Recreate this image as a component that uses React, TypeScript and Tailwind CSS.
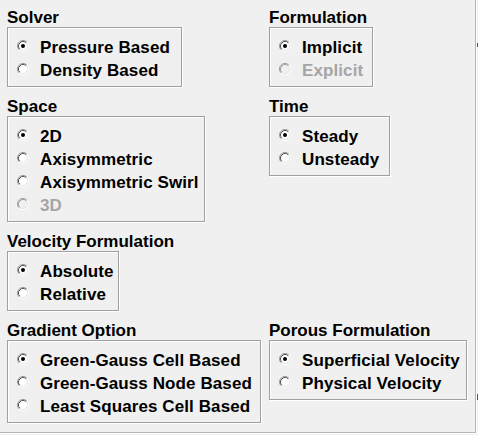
type Option = { label: string; checked?: boolean; disabled?: boolean };

const Radio = ({ checked, disabled }: { checked?: boolean; disabled?: boolean }) => (
  <svg width="12" height="12" viewBox="0 0 12 12" className="shrink-0 mb-[4px]">
    <circle cx="6" cy="6" r="4.5" fill={disabled ? "#f0f0f0" : "#ffffff"} />
    <path d="M2.11 9.89 A5.5 5.5 0 0 1 9.89 2.11" fill="none" stroke="#9a9a9a" strokeWidth="1" />
    <path d="M9.89 2.11 A5.5 5.5 0 0 1 2.11 9.89" fill="none" stroke="#ffffff" strokeWidth="1" />
    <path d="M2.82 9.18 A4.5 4.5 0 0 1 9.18 2.82" fill="none" stroke={disabled ? "#a0a0a0" : "#505050"} strokeWidth="1" />
    <path d="M9.18 2.82 A4.5 4.5 0 0 1 2.82 9.18" fill="none" stroke="#e3e3e3" strokeWidth="1" />
    {checked && <circle cx="6" cy="6" r="2" fill={disabled ? "#a0a0a0" : "#000000"} />}
  </svg>
);

const Group = ({ title, width, options }: { title: string; width: string; options: Option[] }) => (
  <div className="flex flex-col">
    <div className="text-[17px] font-bold leading-[19px] text-black whitespace-nowrap">{title}</div>
    <div
      className={`${width} border border-[#a0a0a0] shadow-[inset_1px_1px_0_#ffffff,1px_1px_0_#ffffff] pl-[9px] pt-[8px] pb-[4px]`}
    >
      {options.map((o) => (
        <div key={o.label} className="flex items-center h-[23px]">
          <Radio checked={o.checked} disabled={o.disabled} />
          <span
            className={`ml-[11px] text-[17px] font-bold leading-[23px] tracking-[0.1px] whitespace-nowrap ${
              o.disabled ? "text-[#a5a5a5]" : "text-black"
            }`}
          >
            {o.label}
          </span>
        </div>
      ))}
    </div>
  </div>
);

export default function App() {
  return (
    <div className="relative w-[478px] h-[435px] bg-[#f0f0f0] font-['Liberation_Sans',Arial,sans-serif] overflow-hidden">
      <div className="w-[476px] h-[433px] border-r border-b border-[#b4b4b4] shadow-[1px_1px_0_#ffffff]">
        <div className="grid grid-cols-[262px_1fr] gap-y-[10px] pl-[7px] pt-[8px] items-start">
          <Group
            title="Solver"
            width="w-[175px]"
            options={[{ label: "Pressure Based", checked: true }, { label: "Density Based" }]}
          />
          <Group
            title="Formulation"
            width="w-[104px]"
            options={[{ label: "Implicit", checked: true }, { label: "Explicit", disabled: true }]}
          />
          <Group
            title="Space"
            width="w-[198px]"
            options={[
              { label: "2D", checked: true },
              { label: "Axisymmetric" },
              { label: "Axisymmetric Swirl" },
              { label: "3D", disabled: true },
            ]}
          />
          <Group
            title="Time"
            width="w-[121px]"
            options={[{ label: "Steady", checked: true }, { label: "Unsteady" }]}
          />
          <Group
            title="Velocity Formulation"
            width="w-[112px]"
            options={[{ label: "Absolute", checked: true }, { label: "Relative" }]}
          />
          <div />
          <Group
            title="Gradient Option"
            width="w-[254px]"
            options={[
              { label: "Green-Gauss Cell Based", checked: true },
              { label: "Green-Gauss Node Based" },
              { label: "Least Squares Cell Based" },
            ]}
          />
          <Group
            title="Porous Formulation"
            width="w-[198px]"
            options={[{ label: "Superficial Velocity", checked: true }, { label: "Physical Velocity" }]}
          />
        </div>
      </div>
      <div className="absolute left-[477px] top-[43px] w-px h-[4px] bg-[#505050]" />
      <div className="absolute left-[477px] top-[394px] w-px h-[6px] bg-[#505050]" />
    </div>
  );
}
